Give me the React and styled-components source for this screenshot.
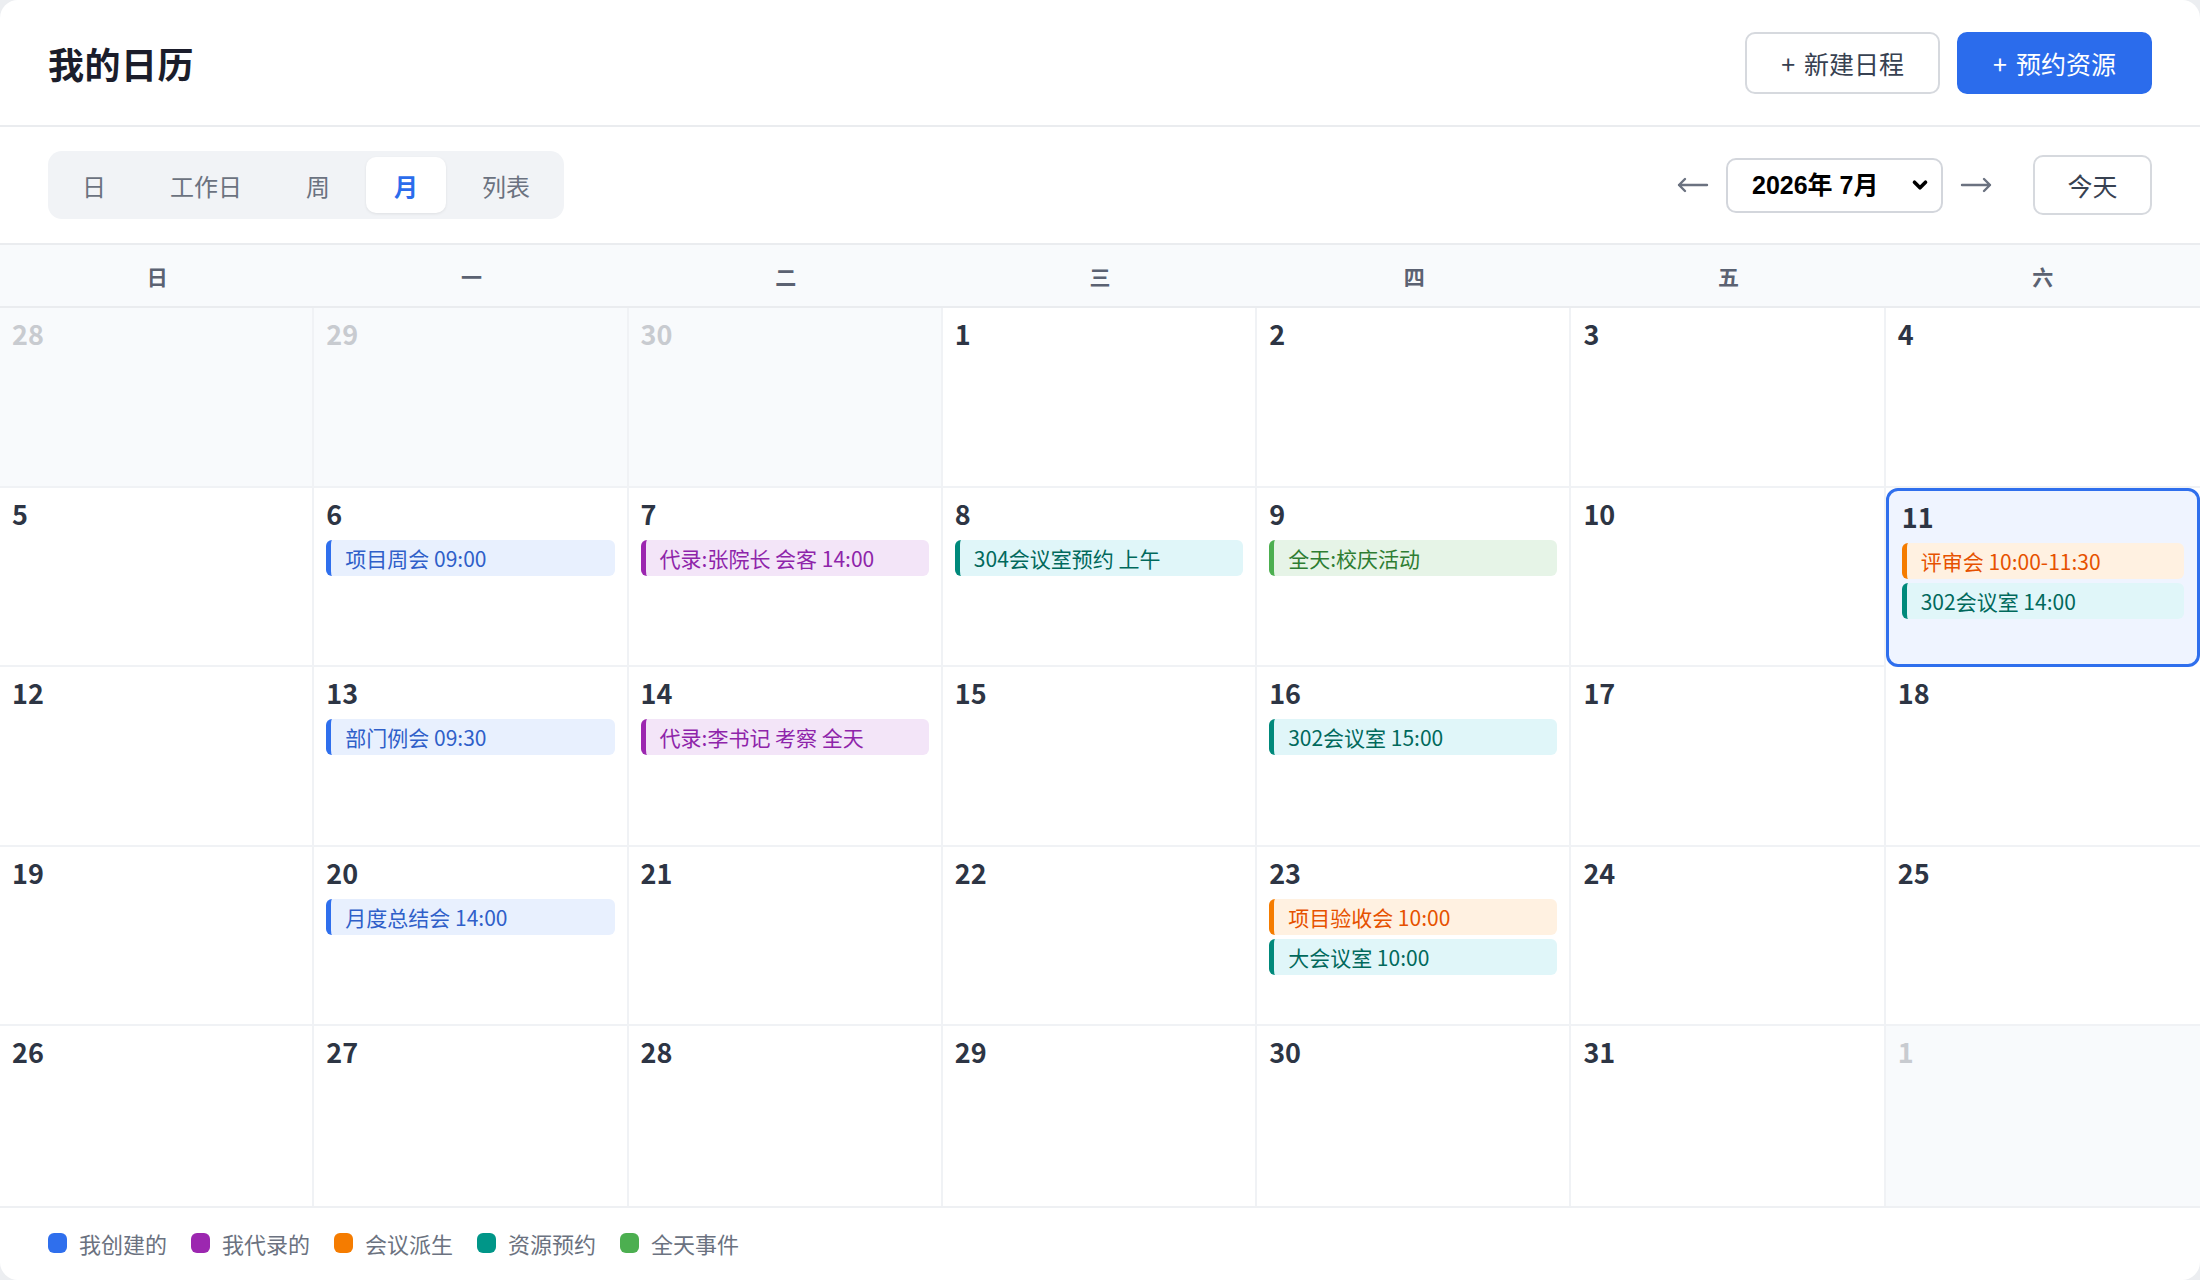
import React from "react";
import styled, { createGlobalStyle, css } from "styled-components";
import { ChevronDown } from "lucide-react";

const GlobalStyle = createGlobalStyle`
  html, body {
    margin: 0;
    padding: 0;
    background: #eceef1;
  }
  body {
    font-family: "Noto Sans CJK SC", "Noto Sans", sans-serif;
    color: #1f2937;
  }
  * { box-sizing: border-box; }
`;

const palette = {
  blue: { bg: "#e8f0fe", bar: "#2f6fed", text: "#2f5fc9", dot: "#2f6fed" },
  purple: { bg: "#f3e5f8", bar: "#9c27b0", text: "#8e24aa", dot: "#9c27b0" },
  orange: { bg: "#fff1e1", bar: "#f57c00", text: "#e65100", dot: "#f57c00" },
  teal: { bg: "#e0f6f9", bar: "#00897b", text: "#00695c", dot: "#009688" },
  green: { bg: "#e6f4e7", bar: "#4caf50", text: "#2e7d32", dot: "#4caf50" },
};

const Card = styled.div`
  height: 100vh;
  background: #fff;
  border-radius: 18px;
  overflow: hidden;
  display: flex;
  flex-direction: column;
`;

const Header = styled.header`
  height: 127px;
  flex: none;
  display: flex;
  align-items: center;
  justify-content: space-between;
  padding: 0 48px;
  border-bottom: 2px solid #eaecef;
`;

const Title = styled.h1`
  margin: 0;
  font-size: 36px;
  font-weight: 700;
  color: #1b1d2b;
  letter-spacing: 0.5px;
`;

const Actions = styled.div`
  display: flex;
  gap: 17px;
`;

const Button = styled.button`
  height: 62px;
  padding: 0 34px;
  border-radius: 10px;
  font-family: inherit;
  font-size: 25px;
  cursor: pointer;
  display: flex;
  align-items: center;
  gap: 9px;
  ${({ $primary }) =>
    $primary
      ? css`
          background: #2b6cec;
          color: #fff;
          border: 2px solid #2b6cec;
        `
      : css`
          background: #fff;
          color: #374151;
          border: 2px solid #d6d9de;
        `}
`;

const Toolbar = styled.div`
  height: 118px;
  flex: none;
  display: flex;
  align-items: center;
  justify-content: space-between;
  padding: 0 48px;
  border-bottom: 2px solid #eaecef;
`;

const Tabs = styled.div`
  display: flex;
  gap: 8px;
  padding: 6px;
  background: #f1f3f6;
  border-radius: 14px;
`;

const Tab = styled.button`
  height: 56px;
  padding: 0 28px;
  border: none;
  border-radius: 10px;
  font-family: inherit;
  font-size: 24px;
  cursor: pointer;
  background: ${({ $active }) => ($active ? "#fff" : "transparent")};
  color: ${({ $active }) => ($active ? "#2b6cec" : "#6b7280")};
  font-weight: ${({ $active }) => ($active ? 700 : 400)};
  box-shadow: ${({ $active }) => ($active ? "0 1px 3px rgba(0,0,0,0.08)" : "none")};
`;

const Nav = styled.div`
  display: flex;
  align-items: center;
`;

const Arrow = styled.button`
  border: none;
  background: none;
  padding: 0;
  width: 34px;
  height: 40px;
  display: flex;
  align-items: center;
  justify-content: center;
  color: #6b7280;
  cursor: pointer;
`;

const SelectWrap = styled.div`
  position: relative;
  margin: 0 16px;
`;

const MonthSelect = styled.select`
  appearance: none;
  display: block;
  width: 217px;
  height: 55px;
  padding: 0 12px 0 24px;
  border: 2px solid #d3d6dc;
  border-radius: 10px;
  background: #fff;
  font-family: "Liberation Sans", "Noto Sans CJK SC", sans-serif;
  font-size: 25px;
  font-weight: 700;
  color: #000;
`;

const Chevron = styled(ChevronDown)`
  position: absolute;
  right: 12px;
  top: 50%;
  transform: translateY(-50%);
  pointer-events: none;
  color: #000;
`;

const TodayButton = styled.button`
  width: 119px;
  height: 60px;
  margin-left: 40px;
  border: 2px solid #d6d9de;
  border-radius: 10px;
  background: #fff;
  font-family: inherit;
  font-size: 25px;
  color: #374151;
  cursor: pointer;
`;

const WeekHead = styled.div`
  height: 63px;
  flex: none;
  display: grid;
  grid-template-columns: repeat(7, 1fr);
  background: #f8fafc;
  border-bottom: 2px solid #eaecef;
`;

const WeekDay = styled.div`
  display: flex;
  align-items: center;
  justify-content: center;
  font-size: 21px;
  font-weight: 700;
  color: #5b6272;
`;

const Month = styled.div`
  height: 900px;
  flex: none;
  display: grid;
  grid-template-columns: repeat(7, 1fr);
  grid-template-rows: repeat(5, 1fr);
  border-bottom: 2px solid #eef0f3;
`;

const Cell = styled.div`
  min-width: 0;
  padding: 10px 12px;
  display: flex;
  flex-direction: column;
  gap: 4px;
  border-right: 2px solid #f0f2f5;
  border-bottom: 2px solid #f0f2f5;
  background: ${({ $muted }) => ($muted ? "#f8fafc" : "#fff")};
  &:nth-child(7n) {
    border-right: none;
  }
  &:nth-last-child(-n + 7) {
    border-bottom: none;
  }
  ${({ $today }) =>
    $today &&
    css`
      border: 3px solid #2f6fed !important;
      border-radius: 12px;
      background: #eff4ff;
      padding: 10px 13px;
    `}
`;

const DayNum = styled.div`
  font-size: 27px;
  font-weight: 700;
  line-height: 32px;
  margin-bottom: 6px;
  color: ${({ $muted }) => ($muted ? "#c8cbd0" : "#2d3544")};
`;

const Event = styled.div`
  height: 36px;
  display: flex;
  align-items: center;
  padding-left: 14px;
  border-left: 5px solid ${({ $kind }) => palette[$kind].bar};
  border-radius: 6px;
  background: ${({ $kind }) => palette[$kind].bg};
  color: ${({ $kind }) => palette[$kind].text};
  font-size: 21px;
  white-space: nowrap;
  overflow: hidden;
`;

const Legend = styled.div`
  flex: 1;
  display: flex;
  align-items: center;
  gap: 24px;
  padding: 0 48px 2px;
`;

const LegendItem = styled.div`
  display: flex;
  align-items: center;
  gap: 12px;
  font-size: 22px;
  color: #6b7280;
`;

const Dot = styled.span`
  width: 19px;
  height: 20px;
  border-radius: 6px;
  background: ${({ $kind }) => palette[$kind].dot};
`;

const ArrowIcon = ({ dir }) => (
  <svg width="32" height="20" viewBox="0 0 32 20" fill="none" stroke="currentColor" strokeWidth="2.4" strokeLinecap="round" strokeLinejoin="round">
    {dir === "left" ? (
      <path d="M30 10H2M8 4L2 10L8 16" />
    ) : (
      <path d="M2 10H30M24 4L30 10L24 16" />
    )}
  </svg>
);

const weekDays = ["日", "一", "二", "三", "四", "五", "六"];

const events = {
  6: [{ kind: "blue", text: "项目周会 09:00" }],
  7: [{ kind: "purple", text: "代录:张院长 会客 14:00" }],
  8: [{ kind: "teal", text: "304会议室预约 上午" }],
  9: [{ kind: "green", text: "全天:校庆活动" }],
  11: [
    { kind: "orange", text: "评审会 10:00-11:30" },
    { kind: "teal", text: "302会议室 14:00" },
  ],
  13: [{ kind: "blue", text: "部门例会 09:30" }],
  14: [{ kind: "purple", text: "代录:李书记 考察 全天" }],
  16: [{ kind: "teal", text: "302会议室 15:00" }],
  20: [{ kind: "blue", text: "月度总结会 14:00" }],
  23: [
    { kind: "orange", text: "项目验收会 10:00" },
    { kind: "teal", text: "大会议室 10:00" },
  ],
};

const days = [
  { n: 28, muted: true },
  { n: 29, muted: true },
  { n: 30, muted: true },
  ...Array.from({ length: 31 }, (_, i) => ({ n: i + 1 })),
  { n: 1, muted: true },
];

const legend = [
  { kind: "blue", label: "我创建的" },
  { kind: "purple", label: "我代录的" },
  { kind: "orange", label: "会议派生" },
  { kind: "teal", label: "资源预约" },
  { kind: "green", label: "全天事件" },
];

const tabs = ["日", "工作日", "周", "月", "列表"];

export default function App() {
  return (
    <>
      <GlobalStyle />
      <Card>
        <Header>
          <Title>我的日历</Title>
          <Actions>
            <Button>
              <span>+</span>新建日程
            </Button>
            <Button $primary>
              <span>+</span>预约资源
            </Button>
          </Actions>
        </Header>

        <Toolbar>
          <Tabs>
            {tabs.map((t) => (
              <Tab key={t} $active={t === "月"}>
                {t}
              </Tab>
            ))}
          </Tabs>
          <Nav>
            <Arrow aria-label="上个月">
              <ArrowIcon dir="left" />
            </Arrow>
            <SelectWrap>
              <MonthSelect defaultValue="2026-07">
                <option value="2026-06">2026年 6月</option>
                <option value="2026-07">2026年 7月</option>
                <option value="2026-08">2026年 8月</option>
              </MonthSelect>
              <Chevron size={22} strokeWidth={4} />
            </SelectWrap>
            <Arrow aria-label="下个月">
              <ArrowIcon dir="right" />
            </Arrow>
            <TodayButton>今天</TodayButton>
          </Nav>
        </Toolbar>

        <WeekHead>
          {weekDays.map((d) => (
            <WeekDay key={d}>{d}</WeekDay>
          ))}
        </WeekHead>

        <Month>
          {days.map((d, i) => {
            const list = d.muted ? [] : events[d.n] || [];
            return (
              <Cell key={i} $muted={d.muted} $today={!d.muted && d.n === 11}>
                <DayNum $muted={d.muted}>{d.n}</DayNum>
                {list.map((e) => (
                  <Event key={e.text} $kind={e.kind}>
                    {e.text}
                  </Event>
                ))}
              </Cell>
            );
          })}
        </Month>

        <Legend>
          {legend.map((l) => (
            <LegendItem key={l.label}>
              <Dot $kind={l.kind} />
              {l.label}
            </LegendItem>
          ))}
        </Legend>
      </Card>
    </>
  );
}
